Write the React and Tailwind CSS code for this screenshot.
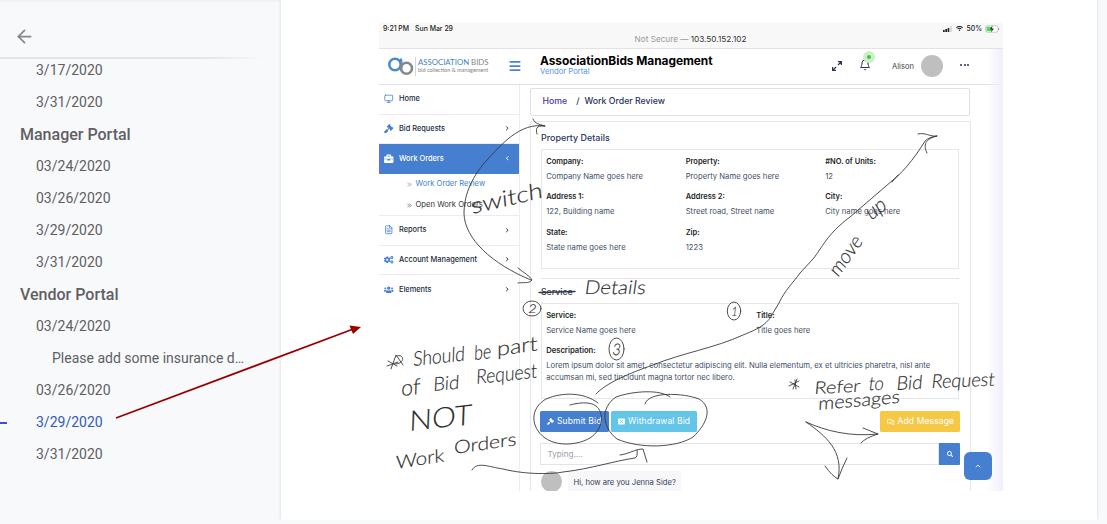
import React from "react";
import { FaGavel, FaBriefcase, FaCogs, FaUsers, FaSearch, FaRegComments, FaWifi } from "react-icons/fa";
import { FiMonitor, FiBell, FiFileText } from "react-icons/fi";
import { ChevronRight, ChevronLeft, ChevronUp, ChevronsRight, Menu, ArrowLeft } from "lucide-react";

const outline = [
  { label: "3/17/2020" },
  { label: "3/31/2020" },
  { label: "Manager Portal", level: 0 },
  { label: "03/24/2020" },
  { label: "03/26/2020" },
  { label: "3/29/2020" },
  { label: "3/31/2020" },
  { label: "Vendor Portal", level: 0 },
  { label: "03/24/2020" },
  { label: "Please add some insurance d…", level: 2 },
  { label: "03/26/2020" },
  { label: "3/29/2020", active: true },
  { label: "3/31/2020" },
];

function OutlineItem({ label, level = 1, active }) {
  if (level === 0) {
    return <div className="h-8 pl-5 text-[16px] leading-8 font-medium">{label}</div>;
  }
  return (
    <div className={"flex h-8 items-center pb-px text-[14px] leading-[31px] " + (active ? "text-[#3159c0]" : "")}>
      {active && <span className="h-[2px] w-[7px] bg-[#3159c0]" />}
      <span className={level === 2 ? "pl-[52px]" : active ? "pl-[29px]" : "pl-9"}>{label}</span>
    </div>
  );
}

function Outline() {
  return (
    <aside className="h-[524px] w-[281px] shrink-0 font-['Roboto',sans-serif] text-[#5f6063]">
      <div className="h-[3px] bg-linear-to-b from-[#eceef0] to-transparent" />
      <div className="flex h-[52px] items-center pt-[15px] pl-[14px] text-[#85878a]">
        <ArrowLeft size={21} strokeWidth={2} />
      </div>
      <div className="-mt-[2px] h-[2px] w-[265px] translate-y-[4px] bg-linear-to-r from-[#e2e4e7] from-75% to-transparent" />
      {outline.map((o, i) => (
        <OutlineItem key={i} {...o} />
      ))}
    </aside>
  );
}

function StatusBar() {
  return (
    <div className="flex h-[26px] shrink-0 justify-between border-b border-[#e2e2e4] bg-[#f8f8f8] pr-[3px] pl-[4px] text-[6.9px] leading-[11px] font-medium text-[#222]">
      <div className="flex w-[240px] gap-[6px]">
        <span>9:21 PM</span>
        <span>Sun Mar 29</span>
      </div>
      <div className="self-end pb-[3px] text-[8.2px] font-normal whitespace-nowrap text-[#999]">
        Not Secure — <span className="text-[#333]">103.50.152.102</span>
      </div>
      <div className="flex h-[11px] w-[242px] items-center justify-end gap-[3px]">
        <svg width="10" height="6" viewBox="0 0 10 6">
          <path d="M0 4h1.700v2H0zM2.300 3H4v3H2.300zM4.600 2h1.700v4H4.600z" fill="#222" />
          <path d="M7.500 0h1v6h-1z" fill="#bbb" />
        </svg>
        <FaWifi size={7} />
        <span>50%</span>
        <svg width="15" height="8" viewBox="0 0 15 8">
          <rect x="0.500" y="0.800" width="12.500" height="6.400" rx="1.800" fill="#fff" stroke="#b5b5b5" strokeWidth="0.700" />
          <path d="M1.500 1.800h5.500v4.400H1.500z" fill="#4cd964" />
          <path d="M7.500.5 4.800 4.400h2L6 7.600 9 3.600H7z" fill="#333" />
          <path d="M13.700 3v2" stroke="#999" />
        </svg>
      </div>
    </div>
  );
}

function Logo() {
  return (
    <div className="flex w-[118px] items-center">
      <svg width="31" height="22" viewBox="0 0 31 22" fill="none" className="shrink-0">
        <circle cx="8" cy="8.500" r="5.700" stroke="#4b8cc4" strokeWidth="2.500" />
        <path d="M14 2.500V14.500" stroke="#4b8cc4" strokeWidth="2.200" />
        <circle cx="19.500" cy="12.200" r="5.500" stroke="#83888d" strokeWidth="2.500" />
        <path d="M14.800 4v9" stroke="#83888d" strokeWidth="1.200" />
        <path d="M28.500 1v19" stroke="#d5d5d5" strokeWidth="1" />
      </svg>
      <div className="-mt-[2px] font-['Lato',sans-serif] whitespace-nowrap text-[#838383]">
        <div className="text-[7.800px] leading-[9px]">
          <span className="text-[#4385c0]">ASSOCIATION</span> BIDS
        </div>
        <div className="text-[5.500px] leading-[6px]">bid collection &amp; management</div>
      </div>
    </div>
  );
}

function Header() {
  return (
    <header className="flex h-[36px] shrink-0 items-center border-b border-[#e0e1e5] bg-white pr-[34px] pl-[8px]">
      <Logo />
      <Menu size={14} strokeWidth={3} className="-mt-px ml-[3px] text-[#4a82db]" />
      <div className="ml-[18px] flex-1 self-start pt-[4px]">
        <div className="text-[11.950px] leading-[15px] font-bold tracking-[-0.005em] whitespace-nowrap text-black">AssociationBids Management</div>
        <div className="text-[7.700px] leading-[8px] text-[#5792e8]">Vendor Portal</div>
      </div>
      <svg width="10" height="10" viewBox="0 0 10 10" className="-mt-[2px]" fill="none" stroke="#28365c" strokeWidth="1.200">
        <path d="M6 .6h3.400V4M9.400.6 6 4M.6 6v3.400H4M.6 9.400 4 6" />
      </svg>
      <div className="relative -mt-[3px] ml-[17px] text-[#28365c]">
        <FiBell size={12} />
        <span className="absolute -top-[8px] left-[4px] flex size-[12px] items-center justify-center rounded-full bg-[#cdeecb]">
          <span className="size-[4px] rounded-full bg-[#43c131]" />
        </span>
      </div>
      <span className="ml-[21px] text-[7.600px] text-[#444]">Alison</span>
      <span className="-mt-[2px] mr-[17px] ml-[7px] size-[22px] rounded-full bg-[#bfbfbf]" />
      <span className="-mt-[3px] flex gap-[1.500px]">
        <span className="size-[2px] rounded-full bg-[#28365c]" />
        <span className="size-[2px] rounded-full bg-[#28365c]" />
        <span className="size-[2px] rounded-full bg-[#28365c]" />
      </span>
    </header>
  );
}

function NavItem({ Icon, label, chevron = true, active, last }) {
  const Chevron = active ? ChevronLeft : ChevronRight;
  return (
    <div
      className={
        "flex shrink-0 items-center pr-[9px] pb-px text-[7.400px] font-medium " +
        (active ? "h-[30px] border-l-2 border-[#5b74dc] bg-[#467fd0] pl-[3px] text-white" : "h-[29.600px] pl-[5px] text-[#222a3c]") +
        (active || last ? "" : " border-b border-[#ececf0]")
      }
    >
      <Icon size={9.5} className={active ? "text-white" : "text-[#467fd0]"} />
      <span className="ml-[5.500px] flex-1">{label}</span>
      {chevron && <Chevron size={6.5} strokeWidth={3.5} />}
    </div>
  );
}

function Sidebar() {
  return (
    <nav className="flex w-[141px] shrink-0 flex-col border-r border-[#ececf2]">
      <NavItem Icon={FiMonitor} label="Home" chevron={false} />
      <NavItem Icon={FaGavel} label="Bid Requests" />
      <NavItem Icon={FaBriefcase} label="Work Orders" active />
      <div className="flex h-[42px] shrink-0 flex-col justify-center gap-[9px] border-b border-[#ececf0] pl-[27px] text-[7.650px] leading-[12px]">
        <div className="flex items-center text-[#467fd0]">
          <ChevronsRight size={7} className="mr-[2.500px] text-[#777]" />
          Work Order Review
        </div>
        <div className="flex items-center text-[#333]">
          <ChevronsRight size={7} className="mr-[2.500px]" />
          Open Work Orders
        </div>
      </div>
      <NavItem Icon={FiFileText} label="Reports" />
      <NavItem Icon={FaCogs} label="Account Management" />
      <NavItem Icon={FaUsers} label="Elements" last />
    </nav>
  );
}

function Field({ label, value }) {
  return (
    <div className="h-[35.800px]">
      <div className="text-[7.500px] leading-[11px] font-semibold text-[#1d1f24]">{label}</div>
      <div className="mt-[4px] text-[7.690px] leading-[11px] whitespace-nowrap text-[#444f68]">{value}</div>
    </div>
  );
}

function Main() {
  return (
    <main className="flex min-w-0 flex-1 flex-col pl-[10px]">
      <div className="mt-[3px] flex h-[28px] w-[440px] shrink-0 items-center rounded-[2px] border border-[#dfe0e6] pl-[11.500px] text-[8.750px] font-medium text-[#28365c]">
        <span className="text-[#4d36a0]">Home</span>
        <span className="mr-[5px] ml-[9px]">/</span>
        <span>Work Order Review</span>
      </div>
      <section className="mt-[5px] h-[390px] w-[441px] shrink-0 rounded-t-[2px] border border-[#e6e7ec] px-[10px]">
        <h2 className="mt-[9px] h-[18px] text-[8.950px] leading-[14px] font-medium text-[#28365c]">Property Details</h2>
        <div className="grid h-[120px] w-[418px] grid-cols-[139.500px_139.500px_1fr] content-start border border-[#e6e7ec] pt-[5.500px] pl-[4.200px]">
          <Field label="Company:" value="Company Name goes here" />
          <Field label="Property:" value="Property Name goes here" />
          <Field label="#NO. of Units:" value="12" />
          <Field label="Address 1:" value="122, Building name" />
          <Field label="Address 2:" value="Street road, Street name" />
          <Field label="City:" value="City name goes here" />
          <Field label="State:" value="State name goes here" />
          <Field label="Zip:" value="1223" />
        </div>
        <div className="mt-[9px] h-px w-[418px] bg-[#e3e4ea]" />
        <h2 className="mt-[6px] h-[18px] text-[8.700px] leading-[14px] font-medium text-[#28365c]">Service</h2>
        <div className="h-[96px] w-[418px] border border-[#e6e7ec] pt-[5.500px] pl-[4.200px]">
          <div className="grid grid-cols-[210px_1fr]">
            <Field label="Service:" value="Service Name goes here" />
            <Field label="Title:" value="Title goes here" />
          </div>
          <div className="text-[7.650px] leading-[11px] font-semibold text-[#1d1f24]">Descripation:</div>
          <p className="mt-[4px] text-[7.690px] leading-[12px] whitespace-nowrap text-[#444f68]">
            Lorem ipsum dolor sit amet, consectetur adipiscing elit. Nulla elementum, ex et ultricies pharetra, nisl ante
            <br />
            accumsan mi, sed tincidunt magna tortor nec libero.
          </p>
        </div>
        <div className="-ml-px mt-[12px] flex h-[21px] w-[420px] gap-[2px] text-[8.500px] tracking-[0.015em] text-white">
          <div className="flex w-[69px] items-center gap-[3px] rounded-[1.500px] bg-[#467fd0] pl-[7px] whitespace-nowrap">
            <FaGavel size={7} />
            Submit Bid
          </div>
          <div className="flex w-[86px] items-center gap-[3px] rounded-[1.500px] bg-[#63c5e8] pl-[7px] whitespace-nowrap">
            <svg width="7" height="7" viewBox="0 0 7 7">
              <rect y="0.500" width="7" height="6" rx="0.800" fill="#fff" />
              <path d="m2.300 2.300 2.400 2.400m0-2.400L2.300 4.700" stroke="#63c5e8" strokeWidth="0.900" />
            </svg>
            Withdrawal Bid
          </div>
          <div className="ml-auto flex w-[80px] items-center gap-[3px] rounded-[1.500px] bg-[#f5c946] pl-[7px] whitespace-nowrap">
            <FaRegComments size={7.5} />
            Add Message
          </div>
        </div>
        <div className="-ml-px mt-[11px] flex h-[22px] w-[420px]">
          <div className="flex flex-1 items-center border border-[#e3e4ea] pl-[6.500px] text-[8.100px] text-[#a0a0a6]">Typing....</div>
          <div className="flex w-[21px] items-center justify-center rounded-r-[1px] bg-[#467fd0] text-white">
            <FaSearch size={6} />
          </div>
        </div>
        <div className="mt-[6px] flex items-start">
          <span className="size-[21px] shrink-0 rounded-full bg-[#bfbfbf]" />
          <span className="ml-[6px] h-[22px] w-[113px] bg-[#f7f7f9] pl-[5.500px] text-[7.650px] leading-[23px] whitespace-nowrap text-[#34405c]">
            Hi, how are you Jenna Side?
          </span>
        </div>
      </section>
    </main>
  );
}

function Note({ x, y, angle = 0, size, width, children }) {
  return (
    <text
      fontSize={size}
      textLength={width}
      lengthAdjust="spacingAndGlyphs"
      transform={`translate(${x} ${y}) rotate(${angle}) skewX(-8)`}
    >
      {children}
    </text>
  );
}

function Annotations() {
  return (
    <svg className="pointer-events-none absolute inset-0" width="1107" height="524" viewBox="0 0 1107 524" fill="none">
      <path d="M116 418 352 329.500" stroke="#990000" strokeWidth="1.700" />
      <path d="M361 327 349.500 325.500 353 334z" fill="#990000" />
      <g stroke="#3a3a3a" strokeWidth="0.900" strokeLinecap="round" strokeLinejoin="round">
        <path d="M545 126C520 122 501 145 487 160C469 180 464 198 464 214C465 239 492 264 531 280" />
        <path d="M533 119C535 124 539 124 545 126C535 125 536 130 537 134" />
        <path d="M518 268C524 273 530 276 532 280C529 284 523 282 518 283" />
        <path d="M596 394C606 383 630 373 653 365C682 353 715 348 743 335C761 328 768 323 773 313L779 303C785 290 793 283 800 273L813 259C822 248 827 234 850 217L893 180C906 170 919 151 925 141Q929 137 937 136" />
        <path d="M918 134C925 132 930 137 937 136C925 139 923 145 927 153M892 182 898 175" />
        <path d="M598 403C584 392 562 392 546 399C530 408 530 427 545 438C558 447 578 445 590 438C604 429 604 412 596 406C590 401 577 403 570 405" />
        <path d="M670 397C660 389 633 391 616 397C600 408 602 427 617 439C640 449 676 448 693 437C706 425 714 408 699 399C684 393 648 391 645 404" />
        <path d="M472 470C477 461 489 467 503 469C527 475 553 474 563 472C590 469 614 461 635 458Q638 457 637 450M620 455C629 454 635 449 643 449L647 462" />
        <path d="M806 422C826 431 850 437 878 434M863 428 878 434Q865 438 861 443" />
        <path d="M806 422C826 436 844 451 838 479M825 466Q832 476 838 479Q842 468 847 458" />
        <path d="M539 292.500 575 291.500" strokeWidth="1.300" />
        <ellipse cx="532" cy="308.500" rx="9" ry="7.500" />
        <ellipse cx="734" cy="311" rx="6.700" ry="9" />
        <ellipse cx="616.500" cy="349" rx="7.500" ry="11" />
        <path d="M388 361 397 366M391 369 396 355L403 365M387 366 398 362M397 356C404 353 406 364 395 364" />
        <path d="M790 382 799 387M793 389 797 379M789 386 799 381M795 380 796 389" />
      </g>
      <g fill="#2d2d2d" stroke="#2d2d2d" strokeWidth="0.150" fontFamily="Lato, sans-serif" fontWeight="300">
        <Note x={472} y={214} angle={-13} size={22} width={73}>switch</Note>
        <Note x={584} y={294} size={19} width={61}>Details</Note>
        <Note x={838} y={278} angle={-55} size={20} width={44}>move</Note>
        <Note x={871} y={221} angle={-38} size={21} width={21}>up</Note>
        <Note x={413} y={366} angle={-6} size={20} width={52}>Should</Note>
        <Note x={474} y={360} angle={-6} size={20} width={17}>be</Note>
        <Note x={497} y={356} angle={-8} size={20} width={41}>part</Note>
        <Note x={401} y={396} angle={-6} size={22} width={19}>of</Note>
        <Note x={433} y={391} angle={-5} size={19} width={26}>Bid</Note>
        <Note x={476} y={384} angle={-6} size={20} width={61}>Request</Note>
        <Note x={409} y={431} angle={-6} size={28} width={63}>NOT</Note>
        <Note x={396} y={469} angle={-9} size={18} width={49}>Work</Note>
        <Note x={454} y={454} angle={-8} size={18} width={63}>Orders</Note>
        <Note x={528} y={313} size={12} width={8}>2</Note>
        <Note x={731} y={316} size={13} width={6}>1</Note>
        <Note x={612} y={355} size={16} width={8}>3</Note>
        <Note x={814} y={394} angle={-3} size={17} width={46}>Refer</Note>
        <Note x={868} y={390} size={19} width={15}>to</Note>
        <Note x={896} y={390} angle={-3} size={19} width={26}>Bid</Note>
        <Note x={931} y={388} angle={-2} size={19} width={63}>Request</Note>
        <Note x={818} y={410} angle={-5} size={18} width={82}>messages</Note>
      </g>
    </svg>
  );
}

export default function App() {
  return (
    <div className="relative flex h-[524px] w-[1107px] overflow-hidden bg-[#f8f9fb]">
      <Outline />
      <div className="h-[520px] w-[816px] bg-white pt-[23px] pl-[98px] shadow-[0_-2px_2px_1px_#e4e6e9]">
        <div className="relative flex h-[468px] w-[624px] flex-col overflow-hidden bg-white font-['Inter',sans-serif]">
          <StatusBar />
          <Header />
          <div className="flex min-h-0 flex-1">
            <Sidebar />
            <Main />
          </div>
          <div className="absolute top-[26px] right-0 h-[442px] w-[16px] bg-linear-to-r from-transparent to-[#f1effa]" />
          <div className="absolute right-[11px] bottom-[11px] flex size-[28px] items-center justify-center rounded-[6px] bg-[#467fd0] text-white">
            <ChevronUp size={8} strokeWidth={2.5} />
          </div>
        </div>
      </div>
      <Annotations />
    </div>
  );
}
